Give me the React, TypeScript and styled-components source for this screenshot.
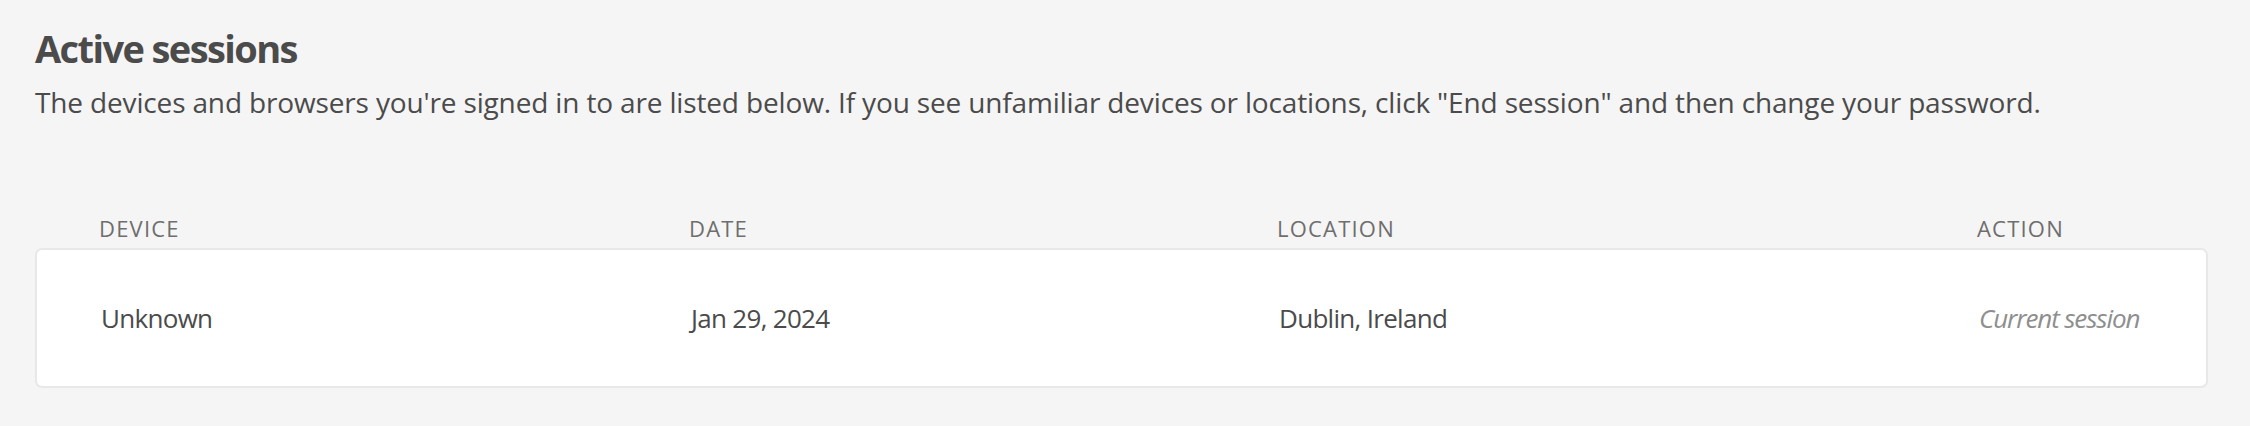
import React from 'react';
import styled, { createGlobalStyle } from 'styled-components';

const GlobalStyle = createGlobalStyle`
  html, body {
    margin: 0;
    padding: 0;
    background: #f5f5f5;
  }
  body {
    font-family: "Open Sans", "Noto Sans", sans-serif;
    color: #4b4b4b;
  }
`;

const Page = styled.div`
  padding: 24px 42px 0 35px;
`;

const Title = styled.h1`
  margin: 0;
  font-size: 38px;
  line-height: 48px;
  font-weight: 700;
  letter-spacing: -1.6px;
  color: #4b4b4b;
`;

const Intro = styled.p`
  margin: 10px 0 0;
  font-size: 28px;
  line-height: 40px;
  letter-spacing: -0.15px;
  color: #4b4b4b;
`;

const Grid = styled.div`
  display: grid;
  grid-template-columns: 590px 588px 700px 1fr;
  padding: 0 64px;
`;

const HeadRow = styled(Grid)`
  margin-top: 90px;
  height: 32px;
  align-items: center;
`;

const HeadCell = styled.div`
  font-size: 22px;
  letter-spacing: 1.2px;
  text-transform: uppercase;
  color: #6e6e6e;
`;

const Card = styled(Grid)`
  margin-top: 4px;
  height: 140px;
  align-items: center;
  background: #fff;
  border: 2px solid #e8e8e8;
  border-radius: 7px;
  box-sizing: border-box;
`;

const Cell = styled.div<{ $muted?: boolean }>`
  font-size: 26px;
  letter-spacing: ${(p) => (p.$muted ? '-1.1px' : '-0.7px')};
  white-space: nowrap;
  color: ${(p) => (p.$muted ? '#8e8e8e' : '#4b4b4b')};
  font-style: ${(p) => (p.$muted ? 'italic' : 'normal')};
`;

const sessions = [
  { device: 'Unknown', date: 'Jan 29, 2024', location: 'Dublin, Ireland', current: true },
];

const App: React.FC = () => (
  <>
    <GlobalStyle />
    <Page>
      <Title>Active sessions</Title>
      <Intro>
        The devices and browsers you're signed in to are listed below. If you see unfamiliar devices or locations, click "End session" and then change your password.
      </Intro>
      <HeadRow>
        <HeadCell>Device</HeadCell>
        <HeadCell>Date</HeadCell>
        <HeadCell>Location</HeadCell>
        <HeadCell>Action</HeadCell>
      </HeadRow>
      {sessions.map((s) => (
        <Card key={s.device + s.date}>
          <Cell>{s.device}</Cell>
          <Cell>{s.date}</Cell>
          <Cell>{s.location}</Cell>
          <Cell $muted={s.current}>{s.current ? 'Current session' : 'End session'}</Cell>
        </Card>
      ))}
    </Page>
  </>
);

export default App;
